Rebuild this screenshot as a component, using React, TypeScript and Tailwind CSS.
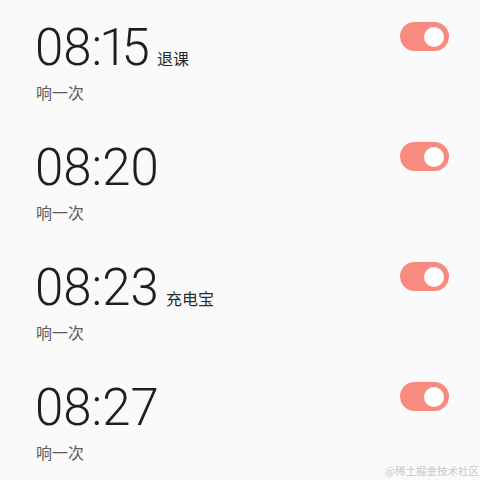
const alarms = [
  { time: '08:15', label: '退课', on: true },
  { time: '08:20', label: '', on: true },
  { time: '08:23', label: '充电宝', on: true },
  { time: '08:27', label: '', on: true },
];

const Toggle = ({ on }: { on: boolean }) => (
  <div
    className={`mt-[22px] flex h-[29px] w-[49px] items-center rounded-full px-[5px] ${
      on ? 'justify-end bg-[#f88a80]' : 'justify-start bg-[#dddddd]'
    }`}
  >
    <div className="h-[20px] w-[20px] rounded-full bg-white" />
  </div>
);

// 数字「1」比其他数字窄
const Time = ({ value }: { value: string }) => (
  <span className="text-[51px] font-[350] leading-[48px] text-[#1f1f1f]">
    {value.split('').map((c, i) =>
      c === ':' && value[i + 1] === '1' ? (
        <span key={i} className="tracking-[-3px]">
          :
        </span>
      ) : c === '1' ? (
        <span key={i} className="tracking-[-6px]">
          1
        </span>
      ) : (
        c
      ),
    )}
  </span>
);

const App = () => {
  return (
    <div
      className="relative h-[480px] w-[480px] overflow-hidden bg-[#fafafa]"
      style={{ fontFamily: 'Roboto, "Noto Sans CJK SC", sans-serif' }}
    >
      {alarms.map((a) => (
        <div key={a.time} className="flex h-[120px] justify-between pl-[35px] pr-[31px]">
          <div className="flex flex-col pt-6">
            <div className="flex items-baseline">
              <Time value={a.time} />
              {a.label && (
                <span className="ml-[7px] text-[16px] leading-none text-[#2a2a2a]">{a.label}</span>
              )}
            </div>
            <span className="mt-[10px] pl-px text-[16px] leading-6 text-[#5c5c5c]">响一次</span>
          </div>
          <Toggle on={a.on} />
        </div>
      ))}
      {/* 水印 */}
      <span
        className="absolute bottom-[4px] right-[1px] text-[10.5px] leading-none text-[#c9c9c9]"
        style={{ fontFamily: '"Noto Sans CJK SC", serif' }}
      >
        @稀土掘金技术社区
      </span>
    </div>
  );
};

export default App;
